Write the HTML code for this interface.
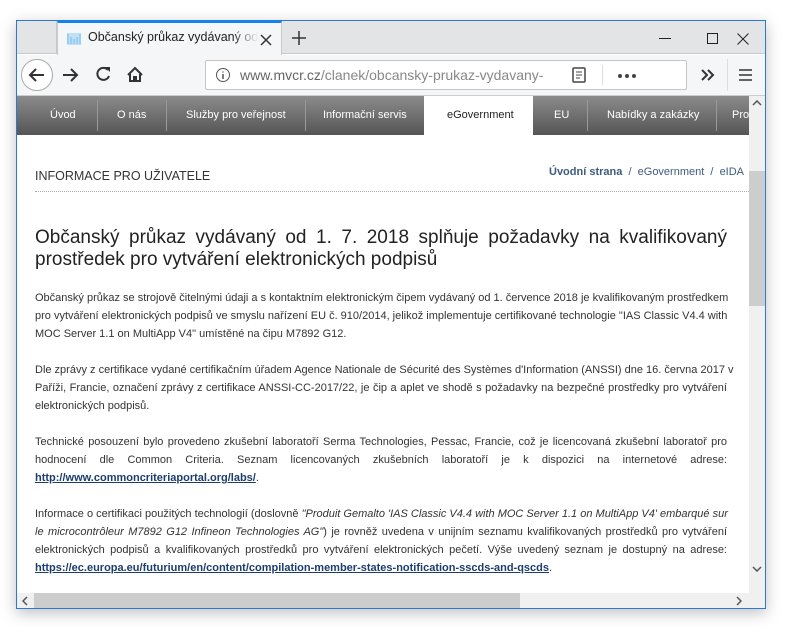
<!DOCTYPE html>
<html><head><meta charset="utf-8"><style>
*{margin:0;padding:0;box-sizing:border-box}
body{width:789px;height:634px;background:#fff;font-family:"Liberation Sans",Arial,sans-serif;position:relative;overflow:hidden}
.win{position:absolute;left:16px;top:20px;width:750px;height:589px;border:1px solid #2b79d0;background:#fff;box-shadow:0 4px 14px rgba(0,0,0,.25);overflow:hidden}
.tabbar{position:absolute;left:0;top:0;width:748px;height:33px;background:#e3e4e6;border-bottom:1px solid #c8c9cb}
.tab{position:absolute;left:40px;top:0;width:225px;height:34px;background:#f5f6f7;border-top:2px solid #0a84ff;border-left:1px solid #c8c9cb;border-right:1px solid #c8c9cb;font-size:12.5px;color:#222;padding:7px 0 0 30px;white-space:nowrap;overflow:hidden}
.toolbar{position:absolute;left:0;top:34px;width:748px;height:41px;background:#f5f6f7;border-bottom:1px solid #ccc}
.url{position:absolute;left:188px;top:5px;width:482px;height:30px;background:#fff;border:1px solid #c5c5c5;border-radius:2px;font-size:14px;color:#666;padding:6px 0 0 34px}
.nav{position:absolute;left:0;top:75px;width:732px;height:39px;background:linear-gradient(#8b8b8b,#555);}
.nav span{position:absolute;top:13px;font-size:11px;color:#fff;white-space:nowrap}
.sep{position:absolute;top:4px;width:1px;height:31px;background:#999}
.vs{position:absolute;left:732px;top:75px;width:16px;height:497px;background:#f0f0f0}
.hs{position:absolute;left:0;top:572px;width:748px;height:16px;background:#f0f0f0}
.c{position:absolute;left:18px;top:114px;width:692px;color:#333;font-size:11px}
.l{height:18px;line-height:18px;text-align:justify;text-align-last:justify;white-space:nowrap}
.l.n{text-align-last:left}
a{color:#1d3d6e;font-weight:bold;text-decoration:underline}
</style></head><body>
<div class="win">
 <div class="tabbar">
  <div style="position:absolute;left:0;top:0;width:40px;height:33px;border-right:1px solid #c8c9cb"></div>
  <div class="tab"><svg style="position:absolute;left:9px;top:10px" width="14" height="12"><rect width="14" height="12" fill="#bfe0f5"/><path d="M1 1v10M4 4v7M7 6v5M10 4v7M13 1v10" stroke="#8cc8ee" stroke-width="1.5"/></svg>Občanský průkaz vydávaný od<div style="position:absolute;left:175px;top:0;width:25px;height:32px;background:linear-gradient(90deg,rgba(245,246,247,0),#f5f6f7)"></div><svg width="12" height="12" style="position:absolute;left:202px;top:11px"><path d="M1 1l10 10M11 1L1 11" stroke="#333" stroke-width="1.5"/></svg></div>
  <svg width="14" height="14" style="position:absolute;left:275px;top:10px"><path d="M7 0v14M0 7h14" stroke="#333" stroke-width="1.5"/></svg>
  <div style="position:absolute;left:642px;top:17px;width:12px;height:1px;background:#222"></div>
  <div style="position:absolute;left:690px;top:12px;width:11px;height:11px;border:1px solid #222"></div>
  <svg width="12" height="12" style="position:absolute;left:720px;top:12px"><path d="M0.5 0.5l11 11M11.5 0.5l-11 11" stroke="#222" stroke-width="1"/></svg>
 </div>
 <div class="toolbar">
  <svg width="188" height="41" style="position:absolute;left:0;top:0">
   <circle cx="20" cy="20" r="15.5" fill="#fff" stroke="#aaa"/>
   <path d="M27 20H13M19 14l-6 6 6 6" stroke="#333" stroke-width="2" fill="none"/>
   <path d="M46 20h14M54 14l6 6-6 6" stroke="#333" stroke-width="2" fill="none"/>
   <path d="M91 15a6 6 0 1 0 1 6" stroke="#333" stroke-width="2" fill="none"/><path d="M88 12h5v5z" fill="#333"/>
   <path d="M111 20l7-7 7 7M113 19v7h10v-7M117 26v-4h2v4" stroke="#333" stroke-width="2" fill="none"/>
  </svg>
  <div class="url"><svg width="16" height="16" style="position:absolute;left:9px;top:6px"><circle cx="8" cy="8" r="6.5" stroke="#555" fill="none"/><path d="M8 7v5M8 4.5v1" stroke="#555" stroke-width="1.5"/></svg>www.mvcr.cz<span style="color:#888">/clanek/obcansky-prukaz-vydavany-</span>
   <svg width="14" height="16" style="position:absolute;left:366px;top:6px"><rect x="1" y="1" width="12" height="14" rx="1" fill="none" stroke="#444" stroke-width="1.5"/><path d="M4 5h6M4 8h6M4 11h4" stroke="#444"/></svg>
   <div style="position:absolute;left:396px;top:4px;width:1px;height:20px;background:#ddd"></div>
   <svg width="20" height="6" style="position:absolute;left:411px;top:12px"><circle cx="3" cy="3" r="2" fill="#444"/><circle cx="10" cy="3" r="2" fill="#444"/><circle cx="17" cy="3" r="2" fill="#444"/></svg>
  </div>
  <svg width="14" height="12" style="position:absolute;left:684px;top:14px"><path d="M1 1l5 5-5 5M7 1l5 5-5 5" stroke="#333" stroke-width="2" fill="none"/></svg>
  <div style="position:absolute;left:710px;top:4px;width:1px;height:32px;background:#ddd"></div>
  <svg width="14" height="12" style="position:absolute;left:722px;top:14px"><path d="M0 1h13M0 6h13M0 11h13" stroke="#333" stroke-width="1.6"/></svg>
 </div>
 <div class="nav">
  <span style="left:33px">Úvod</span><div class="sep" style="left:80px"></div>
  <span style="left:100px">O nás</span><div class="sep" style="left:149px"></div>
  <span style="left:169px">Služby pro veřejnost</span><div class="sep" style="left:288px"></div>
  <span style="left:306px">Informační servis</span>
  <div style="position:absolute;left:407px;top:0;width:109px;height:39px;background:#fff"></div>
  <span style="left:430px;color:#222">eGovernment</span>
  <span style="left:537px">EU</span><div class="sep" style="left:570px"></div>
  <span style="left:590px">Nabídky a zakázky</span><div class="sep" style="left:699px"></div>
  <span style="left:715px">Pro</span>
 </div>
 <div class="vs"><div style="position:absolute;left:0;top:75px;width:16px;height:135px;background:#cdcdcd"></div><svg width="10" height="6" style="position:absolute;left:3px;top:4px"><path d="M1 5l4-4 4 4" stroke="#555" stroke-width="1.5" fill="none"/></svg><svg width="10" height="6" style="position:absolute;left:3px;top:470px"><path d="M1 1l4 4 4-4" stroke="#555" stroke-width="1.5" fill="none"/></svg></div>
 <div class="hs"><div style="position:absolute;left:17px;top:0;width:486px;height:15px;background:#cdcdcd"></div><svg width="6" height="10" style="position:absolute;left:5px;top:3px"><path d="M5 1L1 5l4 4" stroke="#555" stroke-width="1.5" fill="none"/></svg><svg width="6" height="10" style="position:absolute;left:719px;top:3px"><path d="M1 1l4 4-4 4" stroke="#555" stroke-width="1.5" fill="none"/></svg></div>
 <div style="position:absolute;left:732px;top:572px;width:16px;height:16px;background:#f0f0f0"></div>
 <div class="c">
  <div style="position:absolute;left:0;top:34px;font-size:12.5px;color:#333">INFORMACE PRO UŽIVATELE</div>
  <div style="position:absolute;left:514px;top:31px;font-size:11px;color:#3d5a80;white-space:nowrap"><b>Úvodní strana</b> &nbsp;/ &nbsp;eGovernment &nbsp;/ &nbsp;eIDA</div>
  <div style="position:absolute;left:0;top:56px;width:714px;border-top:1px dotted #aaa"></div>
  <div style="position:absolute;left:0;top:92px;width:692px;font-size:19px;color:#222;line-height:22px">
   <div class="l" style="height:22px;line-height:22px">Občanský průkaz vydávaný od 1. 7. 2018 splňuje požadavky na kvalifikovaný</div>
   <div class="l n" style="height:22px;line-height:22px">prostředek pro vytváření elektronických podpisů</div>
  </div>
  <div style="position:absolute;left:0;top:174px;width:692px;margin-top:-20px">
   <div class="l">Občanský průkaz se strojově čitelnými údaji a s kontaktním elektronickým čipem vydávaný od 1. července 2018 je kvalifikovaným prostředkem</div>
   <div class="l">pro vytváření elektronických podpisů ve smyslu nařízení EU č. 910/2014, jelikož implementuje certifikované technologie "IAS Classic V4.4 with</div>
   <div class="l n">MOC Server 1.1 on MultiApp V4" umístěné na čipu M7892 G12.</div>
   <div style="height:18px"></div>
   <div class="l">Dle zprávy z certifikace vydané certifikačním úřadem Agence Nationale de Sécurité des Systèmes d'Information (ANSSI) dne 16. června 2017 v</div>
   <div class="l">Paříži, Francie, označení zprávy z certifikace ANSSI-CC-2017/22, je čip a aplet ve shodě s požadavky na bezpečné prostředky pro vytváření</div>
   <div class="l n">elektronických podpisů.</div>
   <div style="height:18px"></div>
   <div class="l">Technické posouzení bylo provedeno zkušební laboratoří Serma Technologies, Pessac, Francie, což je licencovaná zkušební laboratoř pro</div>
   <div class="l">hodnocení dle Common Criteria. Seznam licencovaných zkušebních laboratoří je k dispozici na internetové adrese:</div>
   <div class="l n"><a>http://www.commoncriteriaportal.org/labs/</a>.</div>
   <div style="height:18px"></div>
   <div class="l">Informace o certifikaci použitých technologií (doslovně <i>"Produit Gemalto 'IAS Classic V4.4 with MOC Server 1.1 on MultiApp V4' embarqué sur</i></div>
   <div class="l"><i>le microcontrôleur M7892 G12 Infineon Technologies AG"</i>) je rovněž uvedena v unijním seznamu kvalifikovaných prostředků pro vytváření</div>
   <div class="l">elektronických podpisů a kvalifikovaných prostředků pro vytváření elektronických pečetí. Výše uvedený seznam je dostupný na adrese:</div>
   <div class="l n"><a>https://ec.europa.eu/futurium/en/content/compilation-member-states-notification-sscds-and-qscds</a>.</div>
  </div>
 </div>
</div>
</body></html>
